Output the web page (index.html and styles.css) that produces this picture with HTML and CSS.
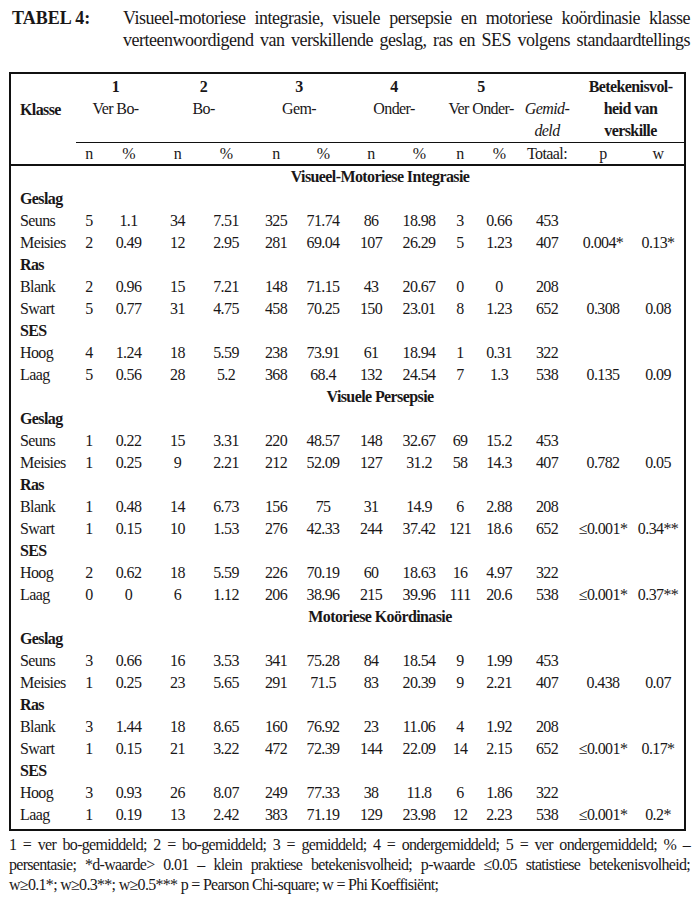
FILE: index.html
```html
<!DOCTYPE html>
<html lang="af">
<head>
<meta charset="utf-8">
<title>Tabel 4</title>
<link rel="stylesheet" href="styles.css">
</head>
<body>
<div class="page">
  <header class="caption">
    <div class="caption-label">TABEL 4:</div>
    <div class="caption-text">
      <span class="jline">Visueel-motoriese integrasie, visuele persepsie en motoriese koördinasie klasse</span>
      <span class="jline">verteenwoordigend van verskillende geslag, ras en SES volgens standaardtellings</span>
    </div>
  </header>

  <table class="data">
    <colgroup>
      <col class="c-klasse"><col class="c-n1"><col class="c-p1"><col class="c-n2"><col class="c-p2"><col class="c-n3"><col class="c-p3"><col class="c-n4"><col class="c-p4"><col class="c-n5"><col class="c-p5"><col class="c-tot"><col class="c-p"><col class="c-w">
    </colgroup>
    <thead>
      <tr class="head-top">
        <th class="klasse">Klasse</th>
        <th colspan="2" class="grp"><b>1</b><br><span class="reg">Ver Bo-</span></th>
        <th colspan="2" class="grp"><b>2</b><br><span class="reg">Bo-</span></th>
        <th colspan="2" class="grp"><b>3</b><br><span class="reg">Gem-</span></th>
        <th colspan="2" class="grp"><b>4</b><br><span class="reg">Onder-</span></th>
        <th colspan="2" class="grp"><b>5</b><br><span class="reg">Ver Onder-</span></th>
        <th class="grp"><br><i class="reg">Gemid-</i><br><i class="reg">deld</i></th>
        <th colspan="2" class="grp sig">Betekenisvol-<br>heid van<br>verskille</th>
      </tr>
      <tr class="head-sub">
        <th class="blank"></th>
        <th>n</th><th>%</th><th>n</th><th>%</th><th>n</th><th>%</th><th>n</th><th>%</th><th>n</th><th>%</th>
        <th>Totaal:</th><th>p</th><th>w</th>
      </tr>
    </thead>
    <tbody>
      <tr class="section"><td></td><td colspan="13">Visueel-Motoriese Integrasie</td></tr>
      <tr class="cat"><td colspan="14">Geslag</td></tr>
      <tr><td class="lbl">Seuns</td><td>5</td><td>1.1</td><td>34</td><td>7.51</td><td>325</td><td>71.74</td><td>86</td><td>18.98</td><td>3</td><td>0.66</td><td>453</td><td></td><td></td></tr>
      <tr><td class="lbl">Meisies</td><td>2</td><td>0.49</td><td>12</td><td>2.95</td><td>281</td><td>69.04</td><td>107</td><td>26.29</td><td>5</td><td>1.23</td><td>407</td><td>0.004*</td><td>0.13*</td></tr>
      <tr class="cat"><td colspan="14">Ras</td></tr>
      <tr><td class="lbl">Blank</td><td>2</td><td>0.96</td><td>15</td><td>7.21</td><td>148</td><td>71.15</td><td>43</td><td>20.67</td><td>0</td><td>0</td><td>208</td><td></td><td></td></tr>
      <tr><td class="lbl">Swart</td><td>5</td><td>0.77</td><td>31</td><td>4.75</td><td>458</td><td>70.25</td><td>150</td><td>23.01</td><td>8</td><td>1.23</td><td>652</td><td>0.308</td><td>0.08</td></tr>
      <tr class="cat"><td colspan="14">SES</td></tr>
      <tr><td class="lbl">Hoog</td><td>4</td><td>1.24</td><td>18</td><td>5.59</td><td>238</td><td>73.91</td><td>61</td><td>18.94</td><td>1</td><td>0.31</td><td>322</td><td></td><td></td></tr>
      <tr><td class="lbl">Laag</td><td>5</td><td>0.56</td><td>28</td><td>5.2</td><td>368</td><td>68.4</td><td>132</td><td>24.54</td><td>7</td><td>1.3</td><td>538</td><td>0.135</td><td>0.09</td></tr>

      <tr class="section"><td></td><td colspan="13">Visuele Persepsie</td></tr>
      <tr class="cat"><td colspan="14">Geslag</td></tr>
      <tr><td class="lbl">Seuns</td><td>1</td><td>0.22</td><td>15</td><td>3.31</td><td>220</td><td>48.57</td><td>148</td><td>32.67</td><td>69</td><td>15.2</td><td>453</td><td></td><td></td></tr>
      <tr><td class="lbl">Meisies</td><td>1</td><td>0.25</td><td>9</td><td>2.21</td><td>212</td><td>52.09</td><td>127</td><td>31.2</td><td>58</td><td>14.3</td><td>407</td><td>0.782</td><td>0.05</td></tr>
      <tr class="cat"><td colspan="14">Ras</td></tr>
      <tr><td class="lbl">Blank</td><td>1</td><td>0.48</td><td>14</td><td>6.73</td><td>156</td><td>75</td><td>31</td><td>14.9</td><td>6</td><td>2.88</td><td>208</td><td></td><td></td></tr>
      <tr><td class="lbl">Swart</td><td>1</td><td>0.15</td><td>10</td><td>1.53</td><td>276</td><td>42.33</td><td>244</td><td>37.42</td><td>121</td><td>18.6</td><td>652</td><td>≤0.001*</td><td>0.34**</td></tr>
      <tr class="cat"><td colspan="14">SES</td></tr>
      <tr><td class="lbl">Hoog</td><td>2</td><td>0.62</td><td>18</td><td>5.59</td><td>226</td><td>70.19</td><td>60</td><td>18.63</td><td>16</td><td>4.97</td><td>322</td><td></td><td></td></tr>
      <tr><td class="lbl">Laag</td><td>0</td><td>0</td><td>6</td><td>1.12</td><td>206</td><td>38.96</td><td>215</td><td>39.96</td><td>111</td><td>20.6</td><td>538</td><td>≤0.001*</td><td>0.37**</td></tr>

      <tr class="section"><td></td><td colspan="13">Motoriese Koördinasie</td></tr>
      <tr class="cat"><td colspan="14">Geslag</td></tr>
      <tr><td class="lbl">Seuns</td><td>3</td><td>0.66</td><td>16</td><td>3.53</td><td>341</td><td>75.28</td><td>84</td><td>18.54</td><td>9</td><td>1.99</td><td>453</td><td></td><td></td></tr>
      <tr><td class="lbl">Meisies</td><td>1</td><td>0.25</td><td>23</td><td>5.65</td><td>291</td><td>71.5</td><td>83</td><td>20.39</td><td>9</td><td>2.21</td><td>407</td><td>0.438</td><td>0.07</td></tr>
      <tr class="cat"><td colspan="14">Ras</td></tr>
      <tr><td class="lbl">Blank</td><td>3</td><td>1.44</td><td>18</td><td>8.65</td><td>160</td><td>76.92</td><td>23</td><td>11.06</td><td>4</td><td>1.92</td><td>208</td><td></td><td></td></tr>
      <tr><td class="lbl">Swart</td><td>1</td><td>0.15</td><td>21</td><td>3.22</td><td>472</td><td>72.39</td><td>144</td><td>22.09</td><td>14</td><td>2.15</td><td>652</td><td>≤0.001*</td><td>0.17*</td></tr>
      <tr class="cat"><td colspan="14">SES</td></tr>
      <tr><td class="lbl">Hoog</td><td>3</td><td>0.93</td><td>26</td><td>8.07</td><td>249</td><td>77.33</td><td>38</td><td>11.8</td><td>6</td><td>1.86</td><td>322</td><td></td><td></td></tr>
      <tr class="last"><td class="lbl">Laag</td><td>1</td><td>0.19</td><td>13</td><td>2.42</td><td>383</td><td>71.19</td><td>129</td><td>23.98</td><td>12</td><td>2.23</td><td>538</td><td>≤0.001*</td><td>0.2*</td></tr>
    </tbody>
  </table>

  <footer class="notes">
    <span class="jline">1 = ver bo-gemiddeld; 2 = bo-gemiddeld; 3 = gemiddeld; 4 = ondergemiddeld; 5 = ver ondergemiddeld; % –</span>
    <span class="jline">persentasie; *d-waarde&gt; 0.01 – klein praktiese betekenisvolheid; p-waarde ≤0.05 statistiese betekenisvolheid;</span>
    <span class="nline">w≥0.1*; w≥0.3**; w≥0.5*** p = Pearson Chi-square; w = Phi Koeffisiënt;</span>
  </footer>
</div>
</body>
</html>
```

FILE: styles.css
```css
html, body {
  margin: 0;
  padding: 0;
  background: #ffffff;
}

body {
  font-family: "Liberation Serif", "Times New Roman", serif;
  color: #1a1718;
}

.page {
  padding: 7px 8px 0 9px;
}

/* Caption */
.caption {
  display: flex;
  align-items: flex-start;
  font-size: 18px;
  line-height: 22px;
  letter-spacing: -0.5px;
}

.caption-label {
  font-weight: bold;
  width: 111px;
  flex: none;
  padding-left: 3px;
  letter-spacing: 0;
}

.caption-text {
  flex: 1;
  min-width: 0;
}

.jline {
  display: block;
  white-space: nowrap;
  text-align: justify;
  text-align-last: justify;
}

.nline {
  display: block;
  white-space: nowrap;
}

/* Table */
.data {
  margin-top: 21px;
  width: 677px;
  table-layout: fixed;
  border-collapse: separate;
  border-spacing: 0;
  border: 2px solid #111;
  font-size: 16px;
  letter-spacing: -0.6px;
}

.c-klasse { width: 65px; }
.c-n1 { width: 26px; }
.c-p1 { width: 53px; }
.c-n2 { width: 45px; }
.c-p2 { width: 52px; }
.c-n3 { width: 48px; }
.c-p3 { width: 46px; }
.c-n4 { width: 50px; }
.c-p4 { width: 46px; }
.c-n5 { width: 36px; }
.c-p5 { width: 42px; }
.c-tot { width: 54px; }
.c-p { width: 58px; }
.c-w { width: 52px; }

.data th,
.data td {
  padding: 0;
  text-align: center;
  white-space: nowrap;
  line-height: 22px;
  height: 22px;
}

.head-top th {
  vertical-align: top;
  padding-top: 2px;
  line-height: 22px;
  font-weight: bold;
}

.head-top th.klasse {
  vertical-align: middle;
  text-align: left;
  padding-left: 9px;
  padding-top: 4px;
}

.head-top .reg {
  font-weight: normal;
}

.head-top .sig {
  padding-left: 3px;
}

.head-sub th {
  font-weight: normal;
  border-top: 1px solid #111;
  border-bottom: 2px solid #111;
  line-height: 21px;
  height: 21px;
}

.head-sub th.blank {
  border-top: none;
}

.section td {
  font-weight: bold;
}

.cat td {
  font-weight: bold;
  text-align: left;
  padding-left: 9px;
}

.data td.lbl {
  text-align: left;
  padding-left: 9px;
}

.last td {
  padding-bottom: 3px;
}

/* Notes */
.notes {
  margin-top: 4px;
  font-size: 16px;
  line-height: 20px;
  letter-spacing: -0.7px;
}
```
